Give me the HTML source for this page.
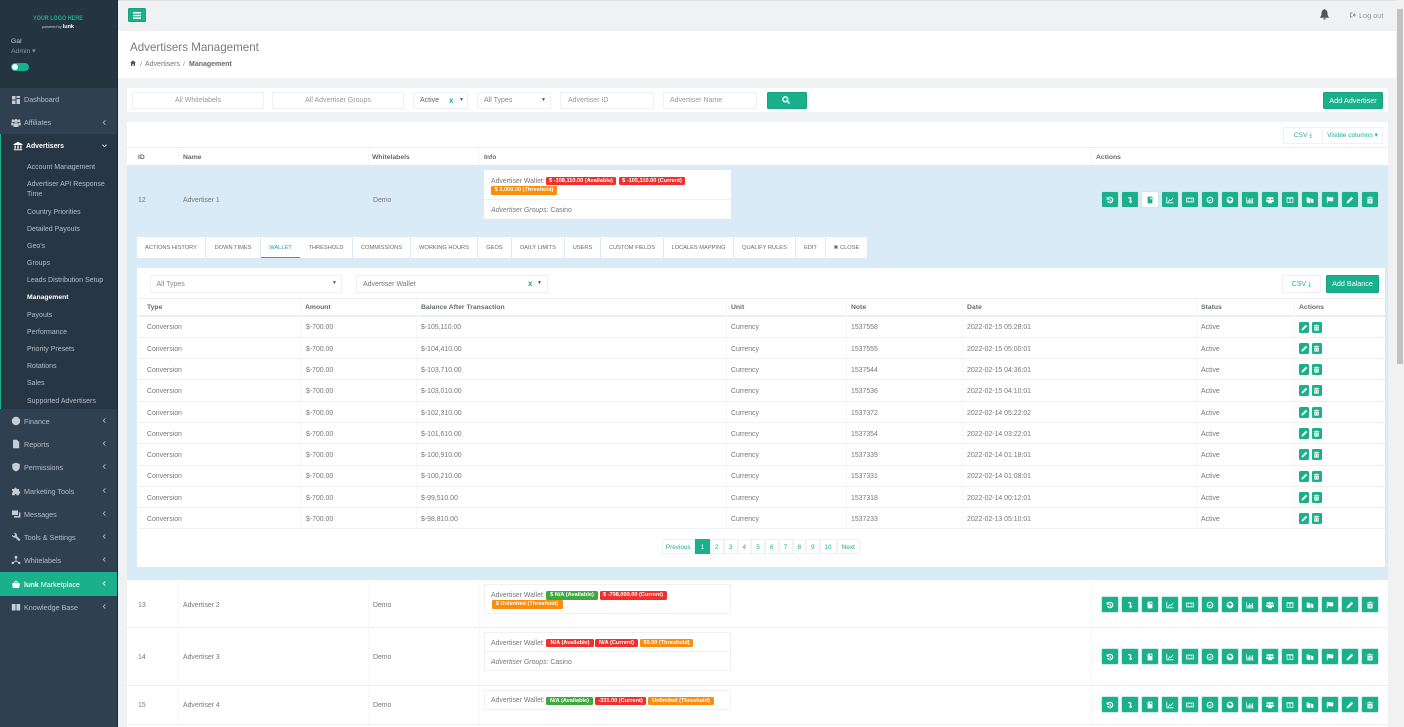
<!DOCTYPE html>
<html><head><meta charset="utf-8"><style>
html,body{margin:0;padding:0;width:1404px;height:727px;overflow:hidden;background:#f0f1f3}
body{font-family:"Liberation Sans",sans-serif;font-size:7px;color:#676a6c;position:relative;filter:blur(.3px)}
div,span,svg{position:absolute;box-sizing:border-box;white-space:nowrap}
.sb{left:0;top:0;width:118px;height:727px;background:#2f4051;border-right:1px solid #1d2a36}
.m{left:24px;font-size:7.2px;color:#b4bfca;line-height:10px;margin-top:1px}
.mi{left:11px;width:10px;height:10px;fill:#c4cdd6}
.ch{left:102px;width:5px;height:5px;fill:none;stroke:#b4bfca;stroke-width:1}
.s{left:27px;font-size:7px;color:#b4bfca;line-height:9px;margin-top:1px}
.b{background:#fff;border:1px solid #f0f1f2}
.f{top:92px;height:17px;line-height:16.500px;font-size:7px;color:#999;text-align:center}
.g{background:#1ab08c;border:1px solid #14a380;color:#fff;border-radius:1.5px;text-align:center}
.th{font-weight:bold;font-size:6.8px;color:#676a6c;line-height:9px;margin-top:1px}
.hr{height:1px;background:#eceef0}
.vl{width:1px;background:#f6f7f8}
.t{font-size:6.9px;line-height:9px;color:#777;margin-top:1px}
.tab{top:237px;height:21px;background:#fff;font-size:5.700px;line-height:22.500px;text-align:center;color:#676a6c}
.r{left:138px;width:1247px;height:21.3px;border-bottom:1.5px solid #eeeff1}
.r span{top:6.900px;font-size:6.9px;line-height:9px;color:#777}
.a{left:9px}.c2{left:168px}.c3{left:283px}.c4{left:593px}.c5{left:713px}.c6{left:829px}.c7{left:1063px}
.ib{width:10px;height:11px;top:5px;background:#1ab08c;border-radius:1.5px}
.ib svg{left:1.5px;top:2px;width:7px;height:7px;fill:#fff}
.ac{width:279px;height:17px}
.ac div{top:0;width:18.6px;height:16.5px;background:#1ab08c;border:1px solid #cfe9e6;border-radius:2px}
.ac svg{left:4.5px;top:3.5px;width:8px;height:8px;fill:#fff}
.bd{height:8.5px;line-height:9.500px;font-size:5.6px;font-weight:bold;color:#fff;border-radius:1.5px;text-align:center}
.red{background:#f0302c}.or{background:#fb8c0c}.gr{background:#3fa93f}
.card{background:#fff;border:1px solid #f0f1f2;border-radius:2px}
.pg{top:539px;height:15px;line-height:15px;font-size:6.4px;color:#1ab08c;text-align:center;background:#fff;border:1px solid #f1f2f3}
</style></head><body>
<svg width="0" height="0" style="position:absolute"><defs>
<symbol id="i1" viewBox="0 0 10 10"><path d="M5 1a4 4 0 1 1-3.6 5.6l1.3-.6A2.6 2.6 0 1 0 3 3.2L4.3 4.5H.8V1l1.2 1.2A4 4 0 0 1 5 1zM4.5 3h1v2.2l1.5 1-.6.8-1.9-1.3z"/></symbol>
<symbol id="i2" viewBox="0 0 10 10"><path d="M2.500 1.500h4v5H8L5.700 9.300 3.400 6.500h1.500V3H2.500z"/></symbol>
<symbol id="i3" viewBox="0 0 10 10"><path d="M2 .8h6v8.400H2zM5 2v2h2V2z" fill-rule="evenodd"/></symbol>
<symbol id="i4" viewBox="0 0 10 10"><path d="M.5 1h1v7h8v1H.5zM2.500 6.500l2-2.500 1.500 1.200L8.600 2l.7.6-3.200 3.900-1.500-1.200-1.800 2.400z"/></symbol>
<symbol id="i5" viewBox="0 0 10 10"><path d="M.2 2h9.600v6H.2zM1.400 3v4h1.600V3zM7 3v4h1.600V3zM5 3.200a1.800 1.800 0 1 0 0 3.600 1.800 1.800 0 0 0 0-3.600z" fill-rule="evenodd"/></symbol>
<symbol id="i6" viewBox="0 0 10 10"><path d="M5 .8a4.200 4.200 0 1 1 0 8.400A4.200 4.200 0 0 1 5 .8zm0 1.300a2.900 2.900 0 1 0 0 5.800 2.900 2.900 0 0 0 0-5.800zM3.500 4.800l1 1 1.800-1.800.6.600-2.400 2.400-1.600-1.600z" fill-rule="evenodd"/></symbol>
<symbol id="i7" viewBox="0 0 10 10"><path d="M5 .8a4.200 4.200 0 1 1 0 8.400A4.200 4.200 0 0 1 5 .8zM2 3.500l2 1.800 1 2 1-1.500L8 4l-2-.6L4.500 2z" fill-rule="evenodd"/></symbol>
<symbol id="i8" viewBox="0 0 10 10"><path d="M.5 1h.8v7.300h8.200v.9H.5zM2 5h1.300v3H2zM3.800 3h1.300v5H3.800zM5.600 4.500h1.300V8H5.600zM7.400 2.500h1.300V8H7.400z"/></symbol>
<symbol id="i9" viewBox="0 0 10 10"><circle cx="5" cy="3" r="1.900"/><circle cx="1.900" cy="2.700" r="1.300"/><circle cx="8.100" cy="2.700" r="1.300"/><path d="M2.500 5.200h5v3.800h-5zM.3 4.500h2v3H.3zM7.700 4.500h2v3h-2z"/></symbol>
<symbol id="i10" viewBox="0 0 10 10"><path d="M.8 1.500h8.400v7H.8zM1.800 3.200v4.300h2.700V3.200zM5.500 3.200v4.300h2.700V3.200z" fill-rule="evenodd"/></symbol>
<symbol id="i11" viewBox="0 0 10 10"><path d="M.8 1.500l4.400 1.200v6.500L.8 8zM5.800 3l3.400 1v5l-3.400-1z"/></symbol>
<symbol id="i12" viewBox="0 0 10 10"><path d="M1 1h1v8H1zM2 1.500c2-1 3.500 1 7 0V6.500c-3.500 1-5-1-7 0z"/></symbol>
<symbol id="i13" viewBox="0 0 10 10"><path d="M7 1l2 2-5.800 5.800-2.500.5.500-2.500z"/></symbol>
<symbol id="i14" viewBox="0 0 10 10"><path d="M3.500 1h3l.4 1H9v1H1V2h2.100zM1.800 3.800h6.400V9.400H1.800zM3.500 5v3h.8V5zM5.700 5v3h.8V5z" fill-rule="evenodd"/></symbol>
</defs></svg>

<!-- SIDEBAR -->
<div class="sb">
 <div style="left:0;top:0;width:117px;height:88px;background:#253441"></div>
 <div style="left:33px;top:15px;font-size:6.800px;font-weight:bold;color:#1ab08c;line-height:8px;transform:scaleX(.8);transform-origin:left">YOUR LOGO HERE</div>
 <div style="left:42px;top:23.500px;font-size:3.800px;color:#cfd6dc;line-height:6px">powered by <b style="font-size:5.500px;color:#fff">lunk</b></div>
 <div style="left:11px;top:37px;font-size:6.800px;color:#c4cdd6;line-height:9px">Gal</div>
 <div style="left:11px;top:47px;font-size:6.800px;color:#8d9aa6;line-height:9px">Admin ▾</div>
 <div style="left:11px;top:63px;width:18px;height:8px;border-radius:4px;background:#1ab08c"></div>
 <div style="left:12px;top:64px;width:6px;height:6px;border-radius:3px;background:#fff"></div>

 <div style="left:0;top:134px;width:117px;height:275px;background:#273644;border-left:1px solid #1ab08c"></div>
 <div style="left:0;top:572px;width:117px;height:24px;background:#1ab08c"></div>

 <svg class="mi" viewBox="0 0 10 10" style="top:95px"><path d="M1 1h3.500v3.500H1zM5.500 1H9v2H5.500zM5.500 4H9v5H5.500zM1 5.500h3.500V9H1z"/></svg><div class="m" style="top:94px">Dashboard</div>
 <svg class="mi" viewBox="0 0 10 10" style="top:118px"><use href="#i9"/></svg><div class="m" style="top:117px">Affiliates</div><svg class="ch" viewBox="0 0 6 6" style="top:120px"><path d="M4 .5L1.500 3 4 5.500"/></svg>
 <svg class="mi" viewBox="0 0 10 10" style="left:13px;top:141px;fill:#fff"><path d="M5 .8l4.500 2.400v.8h-9v-.8zM1.500 4.500h1.300v3.200H1.500zM4.300 4.500h1.400v3.200H4.300zM7.200 4.500h1.300v3.200H7.200zM.8 8.200h8.400v1H.8z"/></svg><div class="m" style="left:26px;top:141px;color:#fff;font-weight:bold;font-size:6.900px">Advertisers</div><svg class="ch" viewBox="0 0 6 6" style="top:143px;stroke:#fff"><path d="M.5 2L3 4.500 5.500 2"/></svg>

 <div class="s" style="top:162px">Account Management</div>
 <div class="s" style="top:179px">Advertiser API Response</div>
 <div class="s" style="top:189px">Time</div>
 <div class="s" style="top:207px">Country Priorities</div>
 <div class="s" style="top:224px">Detailed Payouts</div>
 <div class="s" style="top:241px">Geo's</div>
 <div class="s" style="top:258px">Groups</div>
 <div class="s" style="top:275px">Leads Distribution Setup</div>
 <div class="s" style="top:292px;color:#fff;font-weight:bold;font-size:6.800px">Management</div>
 <div class="s" style="top:310px">Payouts</div>
 <div class="s" style="top:327px">Performance</div>
 <div class="s" style="top:344px">Priority Presets</div>
 <div class="s" style="top:361px">Rotations</div>
 <div class="s" style="top:378px">Sales</div>
 <div class="s" style="top:396px">Supported Advertisers</div>

 <svg class="mi" viewBox="0 0 10 10" style="top:416px"><circle cx="5" cy="5" r="4.200"/></svg><div class="m" style="top:415.500px">Finance</div><svg class="ch" viewBox="0 0 6 6" style="top:418px"><path d="M4 .5L1.500 3 4 5.500"/></svg>
 <svg class="mi" viewBox="0 0 10 10" style="top:439px"><path d="M2 .8h4l2.200 2.200v6.200H2z"/></svg><div class="m" style="top:438.500px">Reports</div><svg class="ch" viewBox="0 0 6 6" style="top:441px"><path d="M4 .5L1.500 3 4 5.500"/></svg>
 <svg class="mi" viewBox="0 0 10 10" style="top:462px"><path d="M5 .6l3.800 1.400v3c0 2.200-1.600 3.700-3.800 4.400C2.800 8.700 1.200 7.200 1.200 5V2z"/></svg><div class="m" style="top:462px">Permissions</div><svg class="ch" viewBox="0 0 6 6" style="top:464px"><path d="M4 .5L1.500 3 4 5.500"/></svg>
 <svg class="mi" viewBox="0 0 10 10" style="top:486px"><path d="M1 3h2.500c-.6-1.800 2.600-1.800 2 0H8v2.400c1.800-.5 1.800 2.600 0 2v1.800H5.400c.5-1.600-2-1.600-1.600 0H1V6.500c1.500.5 1.500-2 0-1.500z"/></svg><div class="m" style="top:485.500px">Marketing Tools</div><svg class="ch" viewBox="0 0 6 6" style="top:488px"><path d="M4 .5L1.500 3 4 5.500"/></svg>
 <svg class="mi" viewBox="0 0 10 10" style="top:509px"><path d="M1 1.500h6v4.500H1zM8 3.500h1.400v5H3V7h5z"/></svg><div class="m" style="top:509px">Messages</div><svg class="ch" viewBox="0 0 6 6" style="top:511px"><path d="M4 .5L1.500 3 4 5.500"/></svg>
 <svg class="mi" viewBox="0 0 10 10" style="top:532px"><path d="M3 .8a2.500 2.500 0 0 1 2.800 3.300L9.400 7.700 8 9.200 4.300 5.500A2.500 2.500 0 0 1 1 2.700l1.500 1.400 1.300-.4.300-1.300z"/></svg><div class="m" style="top:532px">Tools &amp; Settings</div><svg class="ch" viewBox="0 0 6 6" style="top:534px"><path d="M4 .5L1.500 3 4 5.500"/></svg>
 <svg class="mi" viewBox="0 0 10 10" style="top:555px"><circle cx="5" cy="2.200" r="1.400"/><circle cx="1.800" cy="8" r="1.200"/><circle cx="8.200" cy="8" r="1.200"/><path d="M4.600 3h.8v2.500l2.800 2-.5.700L5 6.300 2.300 8.200l-.5-.7 2.800-2z"/></svg><div class="m" style="top:555px">Whitelabels</div><svg class="ch" viewBox="0 0 6 6" style="top:557px"><path d="M4 .5L1.500 3 4 5.500"/></svg>
 <svg class="mi" viewBox="0 0 10 10" style="top:579px;fill:#fff"><path d="M1 4h8l-.8 5H1.800zM3 4c0-3 4-3 4 0H6c0-1.700-2-1.700-2 0z"/></svg><div class="m" style="top:579px;color:#fff"><b>lunk</b> Marketplace</div><svg class="ch" viewBox="0 0 6 6" style="top:581px;stroke:#fff"><path d="M4 .5L1.500 3 4 5.500"/></svg>
 <svg class="mi" viewBox="0 0 10 10" style="top:602px"><path d="M.8 2h3.800v6.500H.8zM5.400 2h3.800v6.500H5.400z"/></svg><div class="m" style="top:602px">Knowledge Base</div><svg class="ch" viewBox="0 0 6 6" style="top:604px"><path d="M4 .5L1.500 3 4 5.500"/></svg>
</div>

<!-- TOP -->
<div style="left:118px;top:0;width:1278px;height:1px;background:#dfe1e3"></div>
<div class="g" style="left:128px;top:8px;width:18px;height:14px"></div>
<svg style="left:133px;top:12px;width:8px;height:7px" viewBox="0 0 8 7" fill="#fff"><path d="M0 0h8v1.500H0zM0 2.700h8v1.500H0zM0 5.400h8v1.500H0z"/></svg>
<svg style="left:1320px;top:9px;width:9px;height:11px" viewBox="0 0 9 11" fill="#555"><path d="M4.500 0c.6 0 .8.400.8.800C7 1.300 7.500 2.800 7.500 4.500c0 2 .6 2.800 1.300 3.500v.8H.2V8c.7-.7 1.300-1.500 1.300-3.500 0-1.700.5-3.200 2.200-3.700C3.700.4 3.900 0 4.500 0zM3.200 9.300h2.600c0 1.700-2.600 1.700-2.600 0z"/></svg>
<svg style="left:1350px;top:12px;width:6px;height:6px" viewBox="0 0 6 6" fill="#999"><path d="M0 .5h2.500v1H1v3h1.500v1H0zM3 2h1V.8L6 3 4 5.200V4H3z"/></svg>
<div style="left:1359px;top:11px;font-size:7.300px;line-height:9px;color:#999">Log out</div>

<!-- HEADER -->
<div style="left:118px;top:31px;width:1278px;height:47px;background:#fff"></div>
<div style="left:130px;top:41px;font-size:11.600px;line-height:14px;color:#7a7c7e">Advertisers Management</div>
<svg style="left:130px;top:60px;width:6px;height:6px" viewBox="0 0 6 6" fill="#555"><path d="M3 .3L6 3H5v3H3.600V4H2.400v2H1V3H0z"/></svg>
<div style="left:140px;top:60px;font-size:6.800px;line-height:9px;color:#888">/</div>
<div style="left:145px;top:60px;font-size:7px;line-height:9px;color:#777">Advertisers</div>
<div style="left:183px;top:60px;font-size:6.800px;line-height:9px;color:#888">/</div>
<div style="left:189px;top:60px;font-size:7px;line-height:9px;color:#676a6c;font-weight:bold">Management</div>

<!-- FILTERS -->
<div style="left:127px;top:88px;width:1261px;height:24px;background:#fff"></div>
<div class="f b" style="left:132px;width:132px">All Whitelabels</div>
<div class="f b" style="left:272px;width:132px">All Advertiser Groups</div>
<div class="f b" style="left:413px;width:55px;text-align:left;padding-left:6px;color:#666">Active</div>
<div style="left:449px;top:96px;font-size:8px;line-height:9px;font-weight:bold;color:#1ab08c">x</div>
<div style="left:459px;top:97px;font-size:5px;line-height:7px;color:#555">▼</div>
<div class="f b" style="left:477px;width:74px;text-align:left;padding-left:6px;color:#888">All Types</div>
<div style="left:541px;top:97px;font-size:5px;line-height:7px;color:#555">▼</div>
<div class="f b" style="left:560px;width:94px;text-align:left;padding-left:7px">Advertiser ID</div>
<div class="f b" style="left:663px;width:94px;text-align:left;padding-left:6px">Advertiser Name</div>
<div class="g" style="left:767px;top:92px;width:39.500px;height:17px"></div>
<svg style="left:782px;top:96px;width:8px;height:8px" viewBox="0 0 8 8" fill="none" stroke="#fff" stroke-width="1.500"><circle cx="3.300" cy="3.300" r="2.400"/><path d="M5 5l2.500 2.500"/></svg>
<div class="g" style="left:1323px;top:92px;width:60px;height:17px;line-height:16px;font-size:7.300px">Add Advertiser</div>

<!-- MAIN PANEL -->
<div style="left:127px;top:122px;width:1261px;height:605px;background:#fff"></div>
<div class="b" style="left:1283px;top:127px;width:40px;height:17px;line-height:15px;text-align:center;color:#1ab08c;font-size:6.600px">CSV ⤓</div>
<div class="b" style="left:1322px;top:127px;width:61px;height:17px;line-height:15px;text-align:center;color:#1ab08c;font-size:6.600px">Visible columns ▾</div>
<div class="hr" style="left:127px;top:147px;width:1261px"></div>
<div class="th" style="left:138px;top:152px">ID</div>
<div class="th" style="left:183px;top:152px">Name</div>
<div class="th" style="left:372px;top:152px">Whitelabels</div>
<div class="th" style="left:484px;top:152px">Info</div>
<div class="th" style="left:1096px;top:152px">Actions</div>
<div class="vl" style="left:178px;top:148px;height:17px"></div>
<div class="vl" style="left:368px;top:148px;height:17px"></div>
<div class="vl" style="left:479px;top:148px;height:17px"></div>
<div class="vl" style="left:1091px;top:148px;height:17px"></div>

<!-- BLUE ROW -->
<div style="left:127px;top:165px;width:1261px;height:415px;background:#d9ebf7;border-top:1px solid #e4e6e8"></div>
<div class="t" style="left:138px;top:195px">12</div>
<div class="t" style="left:183px;top:195px">Advertiser 1</div>
<div class="t" style="left:373px;top:195px">Demo</div>
<div class="card" style="left:484px;top:170px;width:247px;height:49px;border-color:#fff"></div>
<div class="hr" style="left:484px;top:199px;width:247px;background:#eef0f1"></div>
<div class="t" style="left:491px;top:175.500px">Advertiser Wallet:</div>
<div class="bd red" style="left:546px;top:176.500px;width:70px">$ -108,110.00 (Available)</div>
<div class="bd red" style="left:619px;top:176.500px;width:66px">$ -105,110.00 (Current)</div>
<div class="bd or" style="left:491px;top:186px;width:66px">$ 3,000.00 (Threshold)</div>
<div class="t" style="left:491px;top:204.500px"><i>Advertiser Groups:</i> Casino</div>

<div class="ac" style="left:1100.700px;top:191px">
<div style="left:0"><svg><use href="#i1"/></svg></div><div style="left:20px"><svg><use href="#i2"/></svg></div><div style="left:40px;background:#fff"><svg style="fill:#1ab08c"><use href="#i3"/></svg></div><div style="left:60px"><svg><use href="#i4"/></svg></div><div style="left:80px"><svg><use href="#i5"/></svg></div><div style="left:100px"><svg><use href="#i6"/></svg></div><div style="left:120px"><svg><use href="#i7"/></svg></div><div style="left:140px"><svg><use href="#i8"/></svg></div><div style="left:160px"><svg><use href="#i9"/></svg></div><div style="left:180px"><svg><use href="#i10"/></svg></div><div style="left:200px"><svg><use href="#i11"/></svg></div><div style="left:220px"><svg><use href="#i12"/></svg></div><div style="left:240px"><svg><use href="#i13"/></svg></div><div style="left:260px"><svg><use href="#i14"/></svg></div>
</div>

<!-- TABS -->
<div class="tab" style="left:137px;width:68px">ACTIONS HISTORY</div>
<div class="tab" style="left:206px;width:54px">DOWN TIMES</div>
<div class="tab" style="left:261px;width:39px;color:#1ab08c;border-bottom:1.500px solid #1ab08c">WALLET</div>
<div class="tab" style="left:300px;width:52px">THRESHOLD</div>
<div class="tab" style="left:353px;width:57px">COMMISSIONS</div>
<div class="tab" style="left:411px;width:66px">WORKING HOURS</div>
<div class="tab" style="left:478px;width:33px">GEOS</div>
<div class="tab" style="left:512px;width:52px">DAILY LIMITS</div>
<div class="tab" style="left:565px;width:35px">USERS</div>
<div class="tab" style="left:601px;width:62px">CUSTOM FIELDS</div>
<div class="tab" style="left:664px;width:69px">LOCALES MAPPING</div>
<div class="tab" style="left:734px;width:61px">QUALIFY RULES</div>
<div class="tab" style="left:796px;width:29px">EDIT</div>
<div class="tab" style="left:826px;width:41px"><b>✖</b> CLOSE</div>

<!-- WALLET -->
<div style="left:137px;top:268px;width:1248px;height:299px;background:#fff"></div>
<div class="b" style="left:149.500px;top:275px;width:192px;height:18px;line-height:17.500px;padding-left:6px;color:#888">All Types</div>
<div style="left:332px;top:280px;font-size:5px;line-height:7px;color:#555">▼</div>
<div class="b" style="left:356px;top:275px;width:191.500px;height:18px;line-height:17.500px;padding-left:6px;color:#777">Advertiser Wallet</div>
<div style="left:528px;top:279px;font-size:8px;line-height:9px;font-weight:bold;color:#1ab08c">x</div>
<div style="left:537px;top:280px;font-size:5px;line-height:7px;color:#555">▼</div>
<div class="b" style="left:1282px;top:275px;width:39px;height:18px;line-height:17px;text-align:center;color:#1ab08c;font-size:7px">CSV ⤓</div>
<div class="g" style="left:1326px;top:275px;width:53px;height:17.500px;line-height:16.500px;font-size:7.200px">Add Balance</div>

<div class="hr" style="left:138px;top:298px;width:1247px"></div>
<div class="th" style="left:147px;top:302px">Type</div>
<div class="th" style="left:305px;top:302px">Amount</div>
<div class="th" style="left:421px;top:302px">Balance After Transaction</div>
<div class="th" style="left:731px;top:302px">Unit</div>
<div class="th" style="left:851px;top:302px">Note</div>
<div class="th" style="left:967px;top:302px">Date</div>
<div class="th" style="left:1201px;top:302px">Status</div>
<div class="th" style="left:1299px;top:302px">Actions</div>
<div class="hr" style="left:138px;top:315px;width:1247px;height:1.500px"></div>
<div class="vl" style="left:300px;top:299px;height:230px"></div>
<div class="vl" style="left:416px;top:299px;height:230px"></div>
<div class="vl" style="left:726px;top:299px;height:230px"></div>
<div class="vl" style="left:846px;top:299px;height:230px"></div>
<div class="vl" style="left:962px;top:299px;height:230px"></div>
<div class="vl" style="left:1196px;top:299px;height:230px"></div>
<div class="vl" style="left:1294px;top:299px;height:230px"></div>

<div class="r" style="top:316.500px"><span class="a">Conversion</span><span class="c2">$-700.00</span><span class="c3">$-105,110.00</span><span class="c4">Currency</span><span class="c5">1537558</span><span class="c6">2022-02-15 05:28:01</span><span class="c7">Active</span><div class="ib" style="left:1161px"><svg><use href="#i13"/></svg></div><div class="ib" style="left:1173.500px"><svg><use href="#i14"/></svg></div></div>
<div class="r" style="top:337.800px"><span class="a">Conversion</span><span class="c2">$-700.00</span><span class="c3">$-104,410.00</span><span class="c4">Currency</span><span class="c5">1537555</span><span class="c6">2022-02-15 05:00:01</span><span class="c7">Active</span><div class="ib" style="left:1161px"><svg><use href="#i13"/></svg></div><div class="ib" style="left:1173.500px"><svg><use href="#i14"/></svg></div></div>
<div class="r" style="top:359.100px"><span class="a">Conversion</span><span class="c2">$-700.00</span><span class="c3">$-103,710.00</span><span class="c4">Currency</span><span class="c5">1537544</span><span class="c6">2022-02-15 04:36:01</span><span class="c7">Active</span><div class="ib" style="left:1161px"><svg><use href="#i13"/></svg></div><div class="ib" style="left:1173.500px"><svg><use href="#i14"/></svg></div></div>
<div class="r" style="top:380.400px"><span class="a">Conversion</span><span class="c2">$-700.00</span><span class="c3">$-103,010.00</span><span class="c4">Currency</span><span class="c5">1537536</span><span class="c6">2022-02-15 04:10:01</span><span class="c7">Active</span><div class="ib" style="left:1161px"><svg><use href="#i13"/></svg></div><div class="ib" style="left:1173.500px"><svg><use href="#i14"/></svg></div></div>
<div class="r" style="top:401.700px"><span class="a">Conversion</span><span class="c2">$-700.00</span><span class="c3">$-102,310.00</span><span class="c4">Currency</span><span class="c5">1537372</span><span class="c6">2022-02-14 05:22:02</span><span class="c7">Active</span><div class="ib" style="left:1161px"><svg><use href="#i13"/></svg></div><div class="ib" style="left:1173.500px"><svg><use href="#i14"/></svg></div></div>
<div class="r" style="top:423px"><span class="a">Conversion</span><span class="c2">$-700.00</span><span class="c3">$-101,610.00</span><span class="c4">Currency</span><span class="c5">1537354</span><span class="c6">2022-02-14 03:22:01</span><span class="c7">Active</span><div class="ib" style="left:1161px"><svg><use href="#i13"/></svg></div><div class="ib" style="left:1173.500px"><svg><use href="#i14"/></svg></div></div>
<div class="r" style="top:444.300px"><span class="a">Conversion</span><span class="c2">$-700.00</span><span class="c3">$-100,910.00</span><span class="c4">Currency</span><span class="c5">1537339</span><span class="c6">2022-02-14 01:18:01</span><span class="c7">Active</span><div class="ib" style="left:1161px"><svg><use href="#i13"/></svg></div><div class="ib" style="left:1173.500px"><svg><use href="#i14"/></svg></div></div>
<div class="r" style="top:465.600px"><span class="a">Conversion</span><span class="c2">$-700.00</span><span class="c3">$-100,210.00</span><span class="c4">Currency</span><span class="c5">1537331</span><span class="c6">2022-02-14 01:08:01</span><span class="c7">Active</span><div class="ib" style="left:1161px"><svg><use href="#i13"/></svg></div><div class="ib" style="left:1173.500px"><svg><use href="#i14"/></svg></div></div>
<div class="r" style="top:486.900px"><span class="a">Conversion</span><span class="c2">$-700.00</span><span class="c3">$-99,510.00</span><span class="c4">Currency</span><span class="c5">1537318</span><span class="c6">2022-02-14 00:12:01</span><span class="c7">Active</span><div class="ib" style="left:1161px"><svg><use href="#i13"/></svg></div><div class="ib" style="left:1173.500px"><svg><use href="#i14"/></svg></div></div>
<div class="r" style="top:508.200px"><span class="a">Conversion</span><span class="c2">$-700.00</span><span class="c3">$-98,810.00</span><span class="c4">Currency</span><span class="c5">1537233</span><span class="c6">2022-02-13 05:10:01</span><span class="c7">Active</span><div class="ib" style="left:1161px"><svg><use href="#i13"/></svg></div><div class="ib" style="left:1173.500px"><svg><use href="#i14"/></svg></div></div>

<!-- PAGINATION -->
<div class="pg" style="left:661.500px;width:33.500px">Previous</div>
<div class="pg" style="left:695px;width:15px;background:#1ab08c;color:#fff;border-color:#1ab08c">1</div>
<div class="pg" style="left:710px;width:13.500px">2</div>
<div class="pg" style="left:723.500px;width:14px">3</div>
<div class="pg" style="left:737.500px;width:13.500px">4</div>
<div class="pg" style="left:751px;width:14px">5</div>
<div class="pg" style="left:765px;width:13.500px">6</div>
<div class="pg" style="left:778.500px;width:14px">7</div>
<div class="pg" style="left:792.500px;width:13.500px">8</div>
<div class="pg" style="left:806px;width:13.500px">9</div>
<div class="pg" style="left:819.500px;width:17px">10</div>
<div class="pg" style="left:836.500px;width:23.500px">Next</div>

<!-- LOWER ROWS -->
<div class="hr" style="left:127px;top:627px;width:1261px"></div>
<div class="hr" style="left:127px;top:685px;width:1261px"></div>
<div class="hr" style="left:127px;top:723.500px;width:1261px"></div>
<div class="vl" style="left:178px;top:580px;height:147px"></div>
<div class="vl" style="left:368px;top:580px;height:147px"></div>
<div class="vl" style="left:479px;top:580px;height:147px"></div>
<div class="vl" style="left:1091px;top:580px;height:147px"></div>

<div class="t" style="left:138px;top:600px">13</div><div class="t" style="left:183px;top:600px">Advertiser 2</div><div class="t" style="left:373px;top:600px">Demo</div>
<div class="card" style="left:483.500px;top:584px;width:247.500px;height:30px"></div>
<div class="t" style="left:491px;top:590px">Advertiser Wallet:</div>
<div class="bd gr" style="left:546px;top:591px;width:52px">$ N/A (Available)</div>
<div class="bd red" style="left:599.500px;top:591px;width:67px">$ -798,000.00 (Current)</div>
<div class="bd or" style="left:491.500px;top:600px;width:71px">$ Unlimited (Threshold)</div>

<div class="t" style="left:138px;top:652px">14</div><div class="t" style="left:183px;top:652px">Advertiser 3</div><div class="t" style="left:373px;top:652px">Demo</div>
<div class="card" style="left:483.500px;top:632px;width:247.500px;height:39px"></div>
<div class="hr" style="left:484px;top:651px;width:247px;background:#f0f1f2"></div>
<div class="t" style="left:491px;top:638px">Advertiser Wallet:</div>
<div class="bd red" style="left:546px;top:638.500px;width:48px">N/A (Available)</div>
<div class="bd red" style="left:595px;top:638.500px;width:43px">N/A (Current)</div>
<div class="bd or" style="left:640px;top:638.500px;width:53px">50.00 (Threshold)</div>
<div class="t" style="left:491px;top:657px"><i>Advertiser Groups:</i> Casino</div>

<div class="t" style="left:138px;top:700px">15</div><div class="t" style="left:183px;top:700px">Advertiser 4</div><div class="t" style="left:373px;top:700px">Demo</div>
<div class="card" style="left:483.500px;top:690px;width:247.500px;height:20px"></div>
<div class="t" style="left:491px;top:695px">Advertiser Wallet:</div>
<div class="bd gr" style="left:546px;top:696.500px;width:47px">N/A (Available)</div>
<div class="bd red" style="left:595px;top:696.500px;width:51px">-331.00 (Current)</div>
<div class="bd or" style="left:648px;top:696.500px;width:66px">Unlimited (Threshold)</div>

<div class="ac" style="left:1100.700px;top:596px">
<div style="left:0"><svg><use href="#i1"/></svg></div><div style="left:20px"><svg><use href="#i2"/></svg></div><div style="left:40px"><svg><use href="#i3"/></svg></div><div style="left:60px"><svg><use href="#i4"/></svg></div><div style="left:80px"><svg><use href="#i5"/></svg></div><div style="left:100px"><svg><use href="#i6"/></svg></div><div style="left:120px"><svg><use href="#i7"/></svg></div><div style="left:140px"><svg><use href="#i8"/></svg></div><div style="left:160px"><svg><use href="#i9"/></svg></div><div style="left:180px"><svg><use href="#i10"/></svg></div><div style="left:200px"><svg><use href="#i11"/></svg></div><div style="left:220px"><svg><use href="#i12"/></svg></div><div style="left:240px"><svg><use href="#i13"/></svg></div><div style="left:260px"><svg><use href="#i14"/></svg></div>
</div>
<div class="ac" style="left:1100.700px;top:648px">
<div style="left:0"><svg><use href="#i1"/></svg></div><div style="left:20px"><svg><use href="#i2"/></svg></div><div style="left:40px"><svg><use href="#i3"/></svg></div><div style="left:60px"><svg><use href="#i4"/></svg></div><div style="left:80px"><svg><use href="#i5"/></svg></div><div style="left:100px"><svg><use href="#i6"/></svg></div><div style="left:120px"><svg><use href="#i7"/></svg></div><div style="left:140px"><svg><use href="#i8"/></svg></div><div style="left:160px"><svg><use href="#i9"/></svg></div><div style="left:180px"><svg><use href="#i10"/></svg></div><div style="left:200px"><svg><use href="#i11"/></svg></div><div style="left:220px"><svg><use href="#i12"/></svg></div><div style="left:240px"><svg><use href="#i13"/></svg></div><div style="left:260px"><svg><use href="#i14"/></svg></div>
</div>
<div class="ac" style="left:1100.700px;top:696px">
<div style="left:0"><svg><use href="#i1"/></svg></div><div style="left:20px"><svg><use href="#i2"/></svg></div><div style="left:40px"><svg><use href="#i3"/></svg></div><div style="left:60px"><svg><use href="#i4"/></svg></div><div style="left:80px"><svg><use href="#i5"/></svg></div><div style="left:100px"><svg><use href="#i6"/></svg></div><div style="left:120px"><svg><use href="#i7"/></svg></div><div style="left:140px"><svg><use href="#i8"/></svg></div><div style="left:160px"><svg><use href="#i9"/></svg></div><div style="left:180px"><svg><use href="#i10"/></svg></div><div style="left:200px"><svg><use href="#i11"/></svg></div><div style="left:220px"><svg><use href="#i12"/></svg></div><div style="left:240px"><svg><use href="#i13"/></svg></div><div style="left:260px"><svg><use href="#i14"/></svg></div>
</div>

<!-- SCROLLBAR -->
<div style="left:1396px;top:0;width:8px;height:727px;background:#f1f1f1"></div>
<div style="left:1397px;top:9px;width:6px;height:355px;background:#c1c1c1"></div>
</body></html>
